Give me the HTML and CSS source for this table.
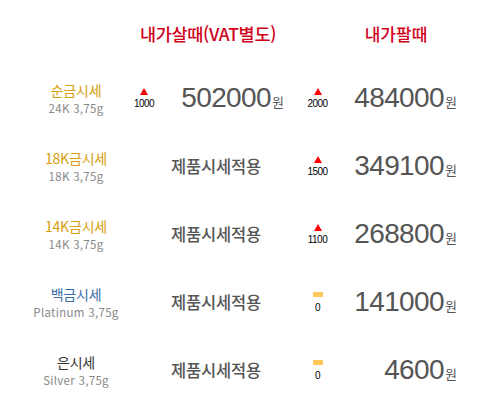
FILE: index.html
```html
<!DOCTYPE html>
<html lang="ko">
<head>
<meta charset="utf-8">
<link rel="stylesheet" href="styles.css">
</head>
<body>
<div class="board">
  <div class="row head">
    <div class="label"></div>
    <div class="buy-head">내가살때(VAT별도)</div>
    <div class="sarrow"></div>
    <div class="sell-head">내가팔때</div>
  </div>

  <div class="row">
    <div class="label"><div class="name gold">순금시세</div><div class="sub">24K 3,75g</div></div>
    <div class="barrow"><span class="tri"></span><span class="chg">1000</span></div>
    <div class="bprice"><span class="num">502000</span><span class="won">원</span></div>
    <div class="sarrow"><span class="tri"></span><span class="chg">2000</span></div>
    <div class="sprice"><span class="num">484000</span><span class="won">원</span></div>
  </div>

  <div class="row">
    <div class="label"><div class="name gold">18K금시세</div><div class="sub">18K 3,75g</div></div>
    <div class="bnote">제품시세적용</div>
    <div class="sarrow"><span class="tri"></span><span class="chg">1500</span></div>
    <div class="sprice"><span class="num">349100</span><span class="won">원</span></div>
  </div>

  <div class="row">
    <div class="label"><div class="name gold">14K금시세</div><div class="sub">14K 3,75g</div></div>
    <div class="bnote">제품시세적용</div>
    <div class="sarrow"><span class="tri"></span><span class="chg">1100</span></div>
    <div class="sprice"><span class="num">268800</span><span class="won">원</span></div>
  </div>

  <div class="row">
    <div class="label"><div class="name blue">백금시세</div><div class="sub">Platinum 3,75g</div></div>
    <div class="bnote">제품시세적용</div>
    <div class="sarrow"><span class="dash"></span><span class="chg">0</span></div>
    <div class="sprice"><span class="num">141000</span><span class="won">원</span></div>
  </div>

  <div class="row">
    <div class="label"><div class="name dark">은시세</div><div class="sub">Silver 3,75g</div></div>
    <div class="bnote">제품시세적용</div>
    <div class="sarrow"><span class="dash"></span><span class="chg">0</span></div>
    <div class="sprice"><span class="num">4600</span><span class="won">원</span></div>
  </div>
</div>
</body>
</html>
```

FILE: styles.css
```css
* { box-sizing: border-box; }
body {
  margin: 0;
  background: #fff;
  font-family: "Noto Sans CJK KR", "Noto Sans", sans-serif;
}
.board {
  width: 483px;
}
.row {
  display: grid;
  grid-template-columns: 132px 24px 144px 35px 122px;
  height: 68px;
  align-items: center;
}
.row.head {
  height: 64px;
  padding-top: 2px;
}
.buy-head {
  grid-column: 2 / 4;
  text-align: center;
  padding-right: 16px;
  color: #d0021b;
  font-size: 17.5px;
  font-weight: 500;
  letter-spacing: -0.3px;
}
.sell-head {
  text-align: center;
  color: #d0021b;
  font-size: 17px;
  font-weight: 500;
}
.label {
  padding-left: 20px;
  text-align: center;
  display: flex;
  flex-direction: column;
  align-items: center;
}
.name {
  font-size: 14px;
  line-height: 19px;
  letter-spacing: -0.2px;
}
.gold { color: #d4a00c; }
.blue { color: #3b6ea5; }
.dark { color: #333; }
.sub {
  font-size: 11.5px;
  line-height: 16px;
  letter-spacing: 0.3px;
  color: #888;
}
.barrow, .sarrow {
  display: flex;
  flex-direction: column;
  align-items: center;
  justify-content: center;
}
.tri {
  width: 0;
  height: 0;
  border-left: 4px solid transparent;
  border-right: 4px solid transparent;
  border-bottom: 7px solid #f00;
  margin-bottom: 3px;
}
.dash {
  width: 10px;
  height: 5px;
  background: #ffc85a;
  margin-bottom: 5px;
}
.chg {
  font-family: "Liberation Sans", Arial, sans-serif;
  font-size: 10px;
  line-height: 11px;
  letter-spacing: -0.5px;
  color: #000;
}
.bprice {
  text-align: right;
  padding-right: 16px;
  white-space: nowrap;
}
.sprice {
  text-align: right;
  white-space: nowrap;
}
.num {
  font-family: "Liberation Sans", Arial, sans-serif;
  font-size: 28px;
  letter-spacing: -0.6px;
  color: #555;
}
.won {
  font-size: 13px;
  color: #555;
  margin-left: 1px;
}
.bnote {
  grid-column: 2 / 4;
  text-align: center;
  font-size: 16.5px;
  font-weight: 500;
  color: #555;
  letter-spacing: -0.2px;
}
```
